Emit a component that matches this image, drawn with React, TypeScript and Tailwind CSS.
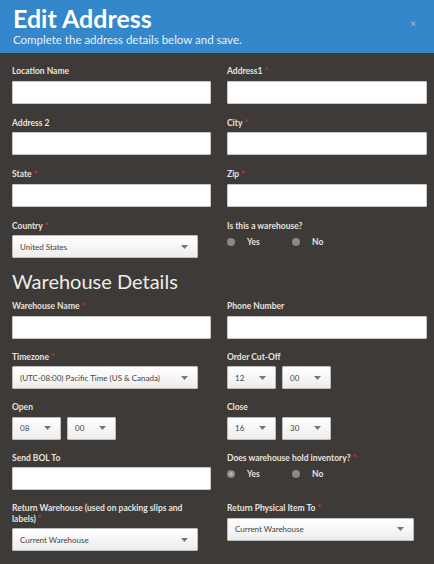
import { ReactNode } from 'react';

const font = { fontFamily: 'Lato, "Open Sans", Arial, sans-serif' };

function Label({ children, req }: { children: ReactNode; req?: boolean }) {
  return (
    <p className="text-[8.5px] leading-[10.5px] font-bold text-[#e6e3df] mb-[4px]">
      {children}
      {req && <span className="text-[#d0312d] ml-[2px]">*</span>}
    </p>
  );
}

function Input() {
  return <div className="h-[23px] w-full bg-white border border-[#c9c9c9] rounded-[1px]" />;
}

function Select({ value, w }: { value: string; w: string }) {
  return (
    <div
      className={`${w} h-[23px] flex items-center justify-between px-[7px] border border-[#bdbdbd] rounded-[1px] bg-gradient-to-b from-white to-[#ededed] text-[8px] text-[#444]`}
    >
      <span>{value}</span>
      <svg width="7" height="4" viewBox="0 0 7 4" className="mr-[2px]">
        <path d="M0 0h7L3.5 4z" fill="#777" />
      </svg>
    </div>
  );
}

function Radio({ label, checked }: { label: string; checked?: boolean }) {
  return (
    <div className="flex items-center w-[65px]">
      <span className="w-[8px] h-[8px] rounded-full bg-[#8a8784] flex items-center justify-center">
        {checked && <span className="w-[4px] h-[4px] rounded-full bg-[#b5b2ae]" />}
      </span>
      <span className="ml-[12px] text-[8.5px] font-bold text-[#e6e3df]">{label}</span>
    </div>
  );
}

function Field({ label, req, children }: { label: ReactNode; req?: boolean; children: ReactNode }) {
  return (
    <div>
      <Label req={req}>{label}</Label>
      {children}
    </div>
  );
}

export default function App() {
  return (
    <div className="w-[434px] h-[564px] bg-[#3e3a37] overflow-hidden" style={font}>
      {/* Header */}
      <div className="h-[53px] bg-[#3387ca] flex items-start justify-between pl-[13px] pr-[18px]">
        <div>
          <h1 className="text-[25px] leading-[28px] font-bold text-white mt-[4px]">Edit Address</h1>
          <p className="text-[11.5px] leading-[14px] text-[#e8f0f8] mt-[1px]">
            Complete the address details below and save.
          </p>
        </div>
        <span className="text-[10px] text-[#a9c4dc] mt-[16px]">×</span>
      </div>

      {/* Body */}
      <div className="pl-[12px] pr-[7px] pt-[13px]">
        <div className="grid grid-cols-[199px_200px] gap-x-[16px] gap-y-[14px]">
          <Field label="Location Name"><Input /></Field>
          <Field label="Address1" req><Input /></Field>
          <Field label="Address 2"><Input /></Field>
          <Field label="City" req><Input /></Field>
          <Field label="State" req><Input /></Field>
          <Field label="Zip" req><Input /></Field>
          <Field label="Country" req>
            <Select value="United States" w="w-[186px]" />
          </Field>
          <Field label="Is this a warehouse?">
            <div className="flex items-center mt-[5px]">
              <Radio label="Yes" />
              <Radio label="No" />
            </div>
          </Field>
        </div>

        <h2 className="text-[20px] leading-[24px] text-[#eeebe8] mt-[11px] mb-[8px]">Warehouse Details</h2>

        <div className="grid grid-cols-[199px_200px] gap-x-[16px] gap-y-[13px]">
          <Field label="Warehouse Name" req><Input /></Field>
          <Field label="Phone Number"><Input /></Field>
          <Field label="Timezone" req>
            <Select value="(UTC-08:00) Pacific Time (US & Canada)" w="w-[186px]" />
          </Field>
          <Field label="Order Cut-Off">
            <div className="flex gap-[6px]">
              <Select value="12" w="w-[49px]" />
              <Select value="00" w="w-[49px]" />
            </div>
          </Field>
          <Field label="Open">
            <div className="flex gap-[6px]">
              <Select value="08" w="w-[49px]" />
              <Select value="00" w="w-[49px]" />
            </div>
          </Field>
          <Field label="Close">
            <div className="flex gap-[6px]">
              <Select value="16" w="w-[49px]" />
              <Select value="30" w="w-[49px]" />
            </div>
          </Field>
          <Field label="Send BOL To"><Input /></Field>
          <Field label="Does warehouse hold inventory?" req>
            <div className="flex items-center mt-[5px]">
              <Radio label="Yes" checked />
              <Radio label="No" />
            </div>
          </Field>
          <Field label="Return Warehouse (used on packing slips and labels)" req>
            <Select value="Current Warehouse" w="w-[186px]" />
          </Field>
          <Field label="Return Physical Item To" req>
            <Select value="Current Warehouse" w="w-[187px]" />
          </Field>
        </div>
      </div>
    </div>
  );
}
